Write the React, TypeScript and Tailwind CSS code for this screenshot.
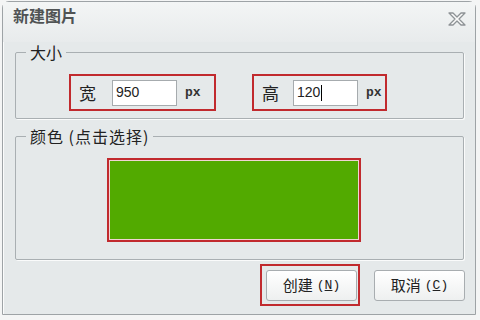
export default function App() {
  return (
    <div className="h-[320px] w-[480px] overflow-hidden bg-[#f4f5f5] pl-[2px] pt-[1px] font-['Noto_Sans_CJK_SC',sans-serif] text-[#222]">
      <div className="h-[314px] w-[474px] rounded-t-[7px] border border-[#9ea3a6] bg-[#e5e9ea] shadow-[inset_1px_1px_0_#fbfcfc]">
        <div className="flex h-[40px] items-start justify-between bg-gradient-to-b from-[#f3f5f5] to-[#e8ebec] pl-[10px] pr-[8px] pt-[3px]">
          <span className="text-[16px] font-bold leading-[20px] text-[#505354]">新建图片</span>
          <CloseIcon />
        </div>

        <fieldset className="ml-[12px] h-[77px] w-[449px] rounded-[2px] border border-[#a9afb2] shadow-[1px_1px_0_#fafbfb]">
          <legend className="ml-[10px] px-[4px] text-[16px] leading-[20px]">大小</legend>
          <div className="mt-[12px] flex">
            <SizeField label="宽" value="950" width="w-[147px]" left="ml-[53px]" labelWidth="w-[33px]" />
            <SizeField label="高" value="120" width="w-[135px]" left="ml-[36px]" labelWidth="w-[31px]" caret />
          </div>
        </fieldset>

        <fieldset className="ml-[12px] mt-[7px] h-[134px] w-[449px] rounded-[2px] border border-[#a9afb2] shadow-[1px_1px_0_#fafbfb]">
          <legend className="ml-[10px] px-[4px] text-[16px] leading-[20px] tracking-[1px]">颜色 (点击选择)</legend>
          <div className="ml-[91px] mt-[12px] h-[84px] w-[254px] border-2 border-[#c12a2e] bg-[#f2d3d3] p-[1px]">
            <div className="h-full w-full bg-[#52aa00]" />
          </div>
        </fieldset>

        <div className="mt-[4px] flex items-center justify-end gap-[14px] pr-[9px]">
          <div className="h-[42px] w-[100px] border-2 border-[#c12a2e] p-[4px]">
            <Button label="创建" hot="N" />
          </div>
          <div className="w-[92px] pt-[1px]">
            <Button label="取消" hot="C" />
          </div>
        </div>
      </div>
    </div>
  );
}

function SizeField({
  label,
  value,
  width,
  left,
  labelWidth,
  caret,
}: {
  label: string;
  value: string;
  width: string;
  left: string;
  labelWidth: string;
  caret?: boolean;
}) {
  return (
    <div className={`flex h-[37px] items-center border-2 border-[#c12a2e] pl-[8px] ${width} ${left}`}>
      <span className={`text-[17px] leading-none ${labelWidth}`}>{label}</span>
      <div className="flex h-[26px] w-[65px] items-center border border-[#a6abae] bg-white pl-[3px] font-['Liberation_Sans',sans-serif] text-[14px]">
        {value}
        {caret && <span className="ml-[1px] h-[16px] w-[1px] bg-black" />}
      </div>
      <span className="ml-[8px] font-['Liberation_Mono',monospace] text-[13px] font-bold text-[#333]">px</span>
    </div>
  );
}

function Button({ label, hot }: { label: string; hot: string }) {
  return (
    <div className="flex h-[31px] w-[91px] items-center justify-center rounded-[3px] border border-[#a8adb0] bg-gradient-to-b from-white to-[#eef0f0] text-[15px] text-[#222]">
      {label}
      <span className="ml-[4px] font-['Liberation_Mono',monospace] text-[13px]">
        (<span className="underline">{hot}</span>)
      </span>
    </div>
  );
}

function CloseIcon() {
  return (
    <svg width="20" height="14" viewBox="0 0 20 14" className="mt-[7px]">
      <path
        d="M2 1 H6 L10 5 L14 1 H18 L12 7 L18 13 H14 L10 9 L6 13 H2 L8 7 Z"
        fill="#fafafa"
        stroke="#8e9396"
        strokeWidth="1.3"
        strokeLinejoin="round"
      />
    </svg>
  );
}
